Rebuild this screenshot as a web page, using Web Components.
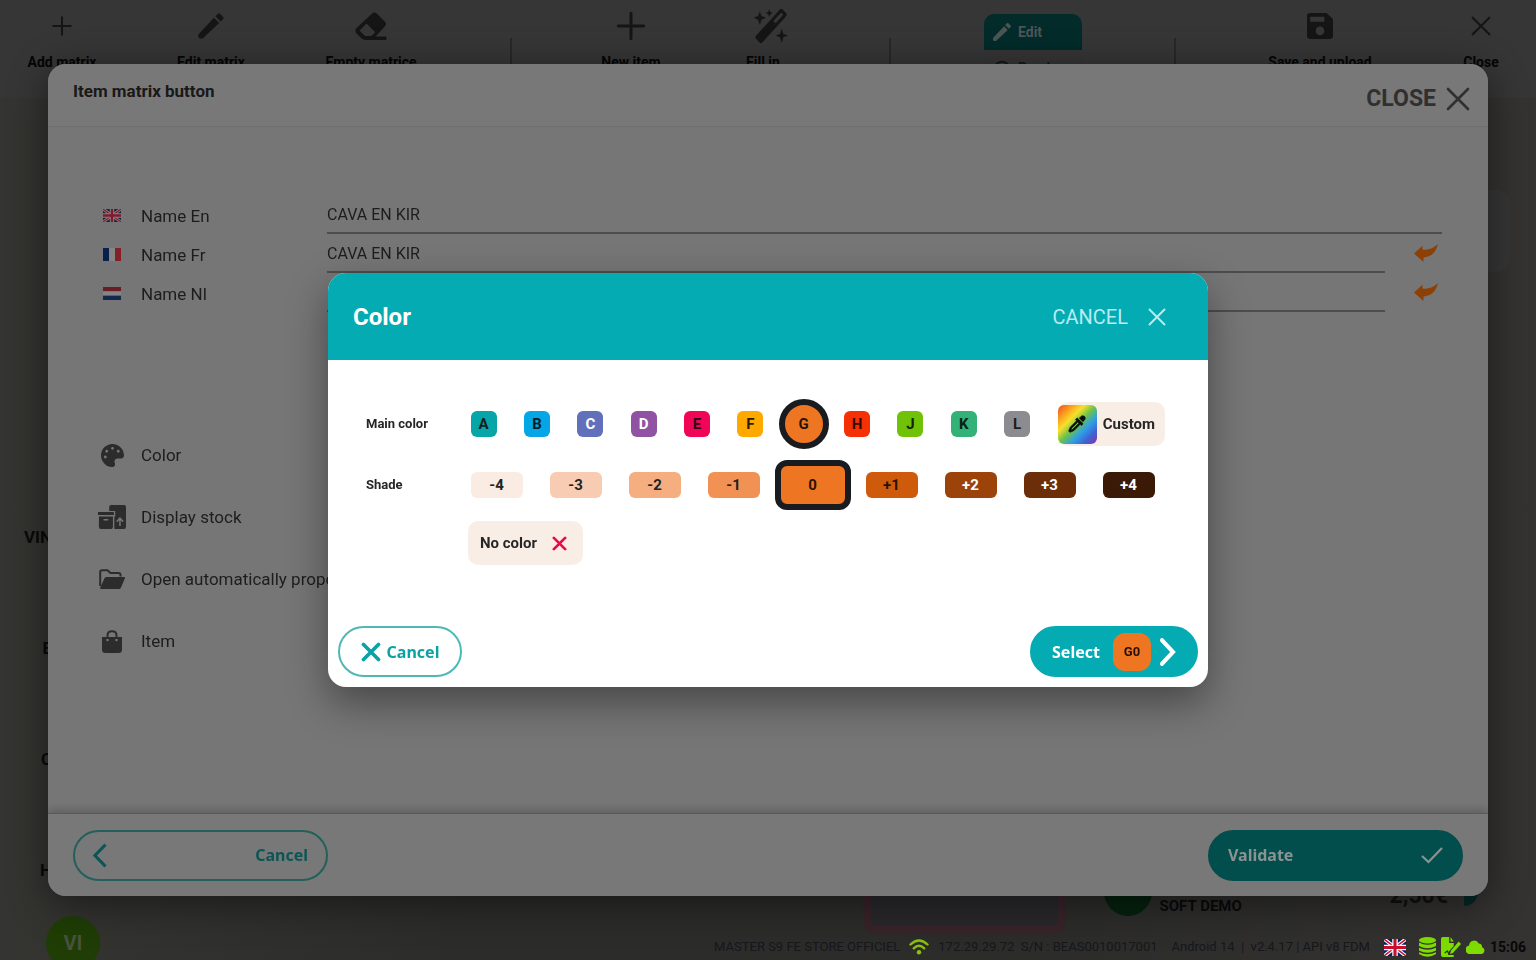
<!DOCTYPE html>
<html lang="en">
<head>
<meta charset="utf-8">
<title>Item matrix button</title>
<style>
  html, body { margin: 0; height: 100%; overflow: hidden; background: #31312f; }
  body {
    --narrow: Roboto, "Liberation Sans", sans-serif;
    --wide: "Noto Sans", sans-serif;
    --teal: #05abb2;
    font-family: var(--narrow);
  }
</style>
</head>
<body>
<pos-app></pos-app>
<script>
const ICONS = {
  plus: ['0 0 24 24', '<path d="M12 2.500V21.500M2.500 12H21.500" stroke="currentColor" stroke-width="2.200" stroke-linecap="round"/>'],
  cross: ['0 0 24 24', '<path d="M2 2L22 22M22 2L2 22" stroke="currentColor" stroke-width="2.600" stroke-linecap="round"/>'],
  crossBold: ['0 0 24 24', '<path d="M3 3L21 21M21 3L3 21" stroke="currentColor" stroke-width="4.400" stroke-linecap="round"/>'],
  pencil: ['2 2 20 20', '<path fill="currentColor" d="M20.71 7.04C21.1 6.65 21.1 6 20.71 5.63L18.37 3.29C18 2.9 17.35 2.9 16.96 3.29L15.12 5.12L18.87 8.87M3 18V19.500Q3 21 4.500 21H6L17.81 9.93L14.06 6.180Z"/>'],
  eraser: ['0 0 32 28', '<path fill="currentColor" fill-rule="evenodd" d="M17.500 1.200Q19.500-.4 21.500 1.300L30 9.700Q32 12 30 14.200L20.500 24.500H31Q32 26 31 28H10.500Q8 28 6.300 26.300L1.300 21.300Q-.6 18.500 1.500 16ZM11.500 11.500L4.500 18.500L10 24H16.500L20.300 20.200Z"/>'],
  wand: ['0 0 48 32', '<g fill="currentColor"><path fill-rule="evenodd" d="M40 1.500Q41.500 0 43 1.500L46 4.500Q47.500 6 46 7.500L23.500 30.500Q22 32 20.500 30.500L17.500 27.500Q16 26 17.500 24.500ZM41.500 4L34 11.500L36 13.500L43.500 6Z"/><path d="M21 3L22.500 7L27 8.700L22.500 10.500L21 15L19.200 10.500L15 8.700L19.200 7ZM30 1L31 3.500L33.500 4.500L31 5.500L30 8L29 5.500L26.500 4.500L29 3.500ZM42 18.500L43.500 23L48 24.500L43.500 26L42 31L40.300 26L36 24.500L40.300 23Z"/></g>'],
  save: ['0 0 24 24', '<path fill="currentColor" fill-rule="evenodd" d="M3 0H18L24 5.500V21Q24 24 21 24H3Q0 24 0 21V3Q0 0 3 0ZM3 3.500V8H16V3.500ZM12 12.500A4 4 0 1 0 12 20.500A4 4 0 1 0 12 12.500Z"/>'],
  eye: ['0 0 24 20', '<path d="M1 10Q12-6 23 10Q12 24 1 10Z" fill="none" stroke="currentColor" stroke-width="2"/><circle cx="12" cy="9" r="4" fill="currentColor"/>'],
  reply: ['0 0 24 20', '<path fill="currentColor" d="M0 10.500L8.500 2V6Q17 7.500 24 0Q21 14 9.500 15V20Z"/>'],
  palette: ['0 0 512 512', '<path fill="currentColor" d="M204.300 5C104.900 24.400 24.800 104.300 5.200 203.400c-37 187 131.700 326.400 258.800 306.700 41.200-6.400 61.400-54.600 42.500-91.700-23.100-45.400 9.900-98.400 60.900-98.400h79.700c35.800 0 64.800-29.600 64.900-65.300C511.500 97.100 368.100-26.900 204.300 5zM96 320c-17.700 0-32-14.300-32-32s14.300-32 32-32 32 14.300 32 32-14.300 32-32 32zm32-128c-17.700 0-32-14.300-32-32s14.300-32 32-32 32 14.300 32 32-14.300 32-32 32zm128-64c-17.700 0-32-14.300-32-32s14.300-32 32-32 32 14.300 32 32-14.300 32-32 32zm128 64c-17.700 0-32-14.300-32-32s14.300-32 32-32 32 14.300 32 32-14.300 32-32 32z"/>'],
  stock: ['0 0 30 24', '<g fill="currentColor"><path d="M0 7H17V10H0Z"/><path fill-rule="evenodd" d="M1 11.500H16V22Q16 24 14 24H3Q1 24 1 22ZM6 14V15.500H11V14Z"/><path fill-rule="evenodd" d="M12 6V2Q12 0 14 0H28Q30 0 30 2V22Q30 24 28 24H17.500V11.500H18.500V6ZM23.500 12L19.500 16L20.500 17.200L22.700 15.200V21H24.300V15.200L26.500 17.200L27.500 16Z"/></g>'],
  folder: ['0 0 26 20', '<path d="M1.200 17V3Q1.200 1.200 3 1.200H8.500L11.500 4H19.500Q21.500 4 21.500 6V7.500" fill="none" stroke="currentColor" stroke-width="2"/><path fill="currentColor" d="M7.500 8H25Q26.500 8 25.800 9.500L22 18.500Q21.300 20 20 20H2Q.8 20 1.200 18.800L5.500 9.300Q6.200 8 7.500 8Z"/>'],
  bag: ['0 0 20 23', '<path d="M5.500 9V5.500Q5.500 1.200 10 1.200T14.500 5.500V9" fill="none" stroke="currentColor" stroke-width="2"/><path fill="currentColor" fill-rule="evenodd" d="M0 7H20V19.500Q20 23 16.500 23H3.500Q0 23 0 19.500ZM5.500 8.800A1.200 1.200 0 1 0 5.500 11.300A1.200 1.200 0 1 0 5.500 8.800ZM14.500 8.800A1.200 1.200 0 1 0 14.500 11.300A1.200 1.200 0 1 0 14.500 8.800Z"/>'],
  chevronLeft: ['0 0 14 24', '<path d="M12.500 1.500L2 12L12.500 22.500" fill="none" stroke="currentColor" stroke-width="3"/>'],
  chevronRight: ['0 0 16 26', '<path d="M2 2L13 13L2 24" fill="none" stroke="currentColor" stroke-width="4" stroke-linecap="round"/>'],
  check: ['0 0 22 18', '<path d="M1 10L7.500 16L21 2" fill="none" stroke="currentColor" stroke-width="2.200"/>'],
  dropper: ['0 0 24 24', '<path fill="currentColor" stroke="currentColor" stroke-width=".8" d="M19.350 11.720L17.220 13.850L15.810 12.430L8.100 20.140L3.500 22L2 20.500L3.860 15.900L11.570 8.190L10.150 6.780L12.280 4.650L19.350 11.720M16.760 3C17.930 1.830 19.830 1.830 21 3C22.170 4.170 22.170 6.070 21 7.240L19.080 9.160L14.840 4.920L16.760 3M5.560 17.030L4.500 19.500L6.970 18.440L14.400 11L13 9.600L5.560 17.030Z"/>'],
  wifi: ['0 0 20 16', '<g fill="none" stroke="currentColor" stroke-width="2.400" stroke-linecap="round"><path d="M1.500 5.500Q10-2.500 18.500 5.500M4.800 9.300Q10 4.300 15.200 9.300"/></g><circle cx="10" cy="13.300" r="2.200" fill="currentColor"/>'],
  uk: ['0 0 24 18', '<path fill="var(--flag-blue,#012169)" d="M0 0H24V18H0Z"/><path stroke="var(--flag-white,#fff)" stroke-width="4" d="M0 0L24 18M24 0L0 18"/><path stroke="var(--flag-red,#c8102e)" stroke-width="1.500" d="M0 0L24 18M24 0L0 18"/><path stroke="var(--flag-white,#fff)" stroke-width="6" d="M12 0V18M0 9H24"/><path stroke="var(--flag-red,#c8102e)" stroke-width="3.400" d="M12 0V18M0 9H24"/>'],
  fr: ['0 0 24 18', '<path fill="#0b1f4d" d="M0 0H8V18H0Z"/><path fill="#858585" d="M8 0H16V18H8Z"/><path fill="#83202a" d="M16 0H24V18H16Z"/>'],
  nl: ['0 0 24 18', '<path fill="#6b1c24" d="M0 0H24V6H0Z"/><path fill="#858585" d="M0 6H24V12H0Z"/><path fill="#15294f" d="M0 12H24V18H0Z"/>'],
  db: ['0 0 18 20', '<g fill="currentColor"><ellipse cx="9" cy="3.200" rx="9" ry="3.200"/><path d="M0 5.500Q9 10 18 5.500V9Q9 13.500 0 9ZM0 10.700Q9 15 18 10.700V13.500Q9 18 0 13.500ZM0 15.200Q9 19.500 18 15.200V17Q9 22.500 0 17Z"/></g>'],
  sign: ['0 0 22 20', '<path fill="currentColor" d="M2 0H9V6H14V9L8 15V18H14V20H2Q0 20 0 18V2Q0 0 2 0ZM10.500 0L14 4.500H10.500Z"/><path d="M4 16L7 14L8.500 17L12 16.500" fill="none" stroke="#263b08" stroke-width="1.200"/><path fill="currentColor" d="M19.500 4.500L22 7L13 16L10 17L11 13.500Z"/>'],
  cloud: ['0 0 20 14', '<path fill="currentColor" d="M4.500 14A4.200 4.200 0 0 1 3.200 5.600A5.500 5.500 0 0 1 13.500 3.500A3.800 3.800 0 0 1 17 7.200A3.500 3.500 0 0 1 16.500 14Z"/>']
};

function define(name, html, init) {
  const tpl = document.createElement('template');
  tpl.innerHTML = html;
  customElements.define(name, class extends HTMLElement {
    constructor() {
      super();
      this.attachShadow({ mode: 'open' }).append(tpl.content.cloneNode(true));
    }
    connectedCallback() { if (init) init(this, this.shadowRoot); }
  });
}

/* An inline drawing, sized by its w and h attributes. */
define('ui-icon', `<style>:host{display:block;flex:none} svg{display:block}</style><svg aria-hidden="true"></svg>`, (el, root) => {
  const [box, body] = ICONS[el.getAttribute('name')];
  const svg = root.querySelector('svg');
  svg.setAttribute('viewBox', box);
  svg.setAttribute('preserveAspectRatio', 'none');
  svg.setAttribute('width', el.getAttribute('w'));
  svg.setAttribute('height', el.getAttribute('h'));
  svg.innerHTML = body;
});

define('tool-button', `<style>
  :host{display:block;justify-self:center}
  button{display:flex;flex-direction:column;align-items:center;gap:8px;padding:8px 0;border:0;background:none;color:#050505;font:bold 14px/20px var(--narrow);white-space:nowrap}
  .art{display:grid;place-items:center;height:36px;color:#151515}
</style><button type="button"><span class="art"><slot name="icon"></slot></span><slot></slot></button>`);

define('app-toolbar', `<style>
  :host{display:grid;grid-template-columns:124fr 174fr 146fr 134fr 106fr 158fr 96fr 190fr 94fr 196fr 8fr 110fr;height:98px;background:#363636}
  i{justify-self:center;width:2px;margin:38px 0 20px;background:#282828}
  .mode{justify-self:center;width:98px;margin-top:14px}
  .mode button{display:flex;align-items:center;gap:6px;width:100%;height:36px;padding:0 8px;border:0;font:bold 14px/20px var(--narrow);background:#353535;color:#151515}
  .mode .on{border-radius:10px 10px 0 0;background:#022b2a;color:#4c5555}
  .last{grid-column:12}
</style>
<tool-button><ui-icon slot="icon" name="plus" w="22" h="22"></ui-icon>Add matrix</tool-button>
<tool-button><ui-icon slot="icon" name="pencil" w="28" h="28"></ui-icon>Edit matrix</tool-button>
<tool-button><ui-icon slot="icon" name="eraser" w="32" h="28"></ui-icon>Empty matrice</tool-button>
<i></i>
<tool-button><ui-icon slot="icon" name="plus" w="32" h="32"></ui-icon>New item</tool-button>
<tool-button><ui-icon slot="icon" name="wand" w="50" h="36"></ui-icon>Fill in</tool-button>
<i></i>
<div class="mode"><button class="on" type="button"><ui-icon name="pencil" w="20" h="20"></ui-icon>Edit</button><button type="button"><ui-icon name="eye" w="20" h="16"></ui-icon>Preview</button></div>
<i></i>
<tool-button><ui-icon slot="icon" name="save" w="26" h="26"></ui-icon>Save and upload</tool-button>
<tool-button class="last"><ui-icon slot="icon" name="cross" w="20" h="20"></ui-icon>Close</tool-button>`);

define('side-categories', `<style>
  :host{display:block}
  ul{display:grid;grid-auto-rows:111px;align-items:center;width:52px;margin:383px 0 0;padding:0;list-style:none;text-align:right;font:bold 17px/24px var(--narrow);color:#0a0a0a}
  .tile{display:grid;place-items:center;width:54px;height:54px;margin:-9px 0 0 46px;border-radius:50%;background:#1f3d05;color:#48533d;font:bold 20px/24px var(--narrow)}
</style><ul><li>VIN</li><li>E</li><li>C</li><li>H</li></ul><div class="tile">VI</div>`);

define('order-strip', `<style>
  :host{display:flex;justify-content:flex-end;align-items:flex-end;gap:38px;padding-right:58px}
  .slot{box-sizing:border-box;width:203px;height:60px;border:8px solid #38242a;border-radius:14px;background:#29282b}
  .demo{display:flex;align-items:flex-end;gap:8px;height:78px;font:bold 15px/20px var(--narrow);color:#0a0a0a}
  .dot{width:48px;height:48px;margin-bottom:18px;border-radius:50%;background:#06220f}
  .name{margin-bottom:18px;width:222px}
  .price{margin-bottom:20px;font:bold 23px/36px var(--narrow);color:#111}
  .tag{width:14px;height:36px;margin:0 0 28px 8px;border-radius:0 0 14px 0;background:#042826}
</style><div class="slot"></div><div class="demo"><span class="dot"></span><span class="name">SOFT DEMO</span><span class="price">2,50€</span><span class="tag"></span></div>`);

define('status-bar', `<style>
  :host{display:flex;justify-content:flex-end;align-items:center;height:26px;padding-right:10px;font:13px/20px var(--narrow);color:#17171c;white-space:nowrap}
  .wifi{margin:0 9px;color:#8dbf10}
  .sys{display:flex;align-items:center;gap:5px;margin-left:14px;color:#7edc00}
  .uk{margin-right:8px}
  .gap{margin-left:14px}
  time{font:bold 14px/20px var(--narrow);color:#080808}
</style>
<span>MASTER S9 FE STORE OFFICIEL</span><ui-icon class="wifi" name="wifi" w="20" h="16"></ui-icon><span>172.29.29.72&nbsp; S/N : BEAS0010017001</span><span class="gap">Android 14&nbsp; |&nbsp; v2.4.17 | API v8 FDM</span>
<div class="sys"><ui-icon class="uk" name="uk" w="22" h="17"></ui-icon><ui-icon name="db" w="17" h="20"></ui-icon><ui-icon name="sign" w="20" h="20"></ui-icon><ui-icon name="cloud" w="19" h="14"></ui-icon><time>15:06</time></div>`);

define('pill-button', `<style>
  :host{display:block}
  button{box-sizing:border-box;display:flex;align-items:center;width:100%;height:51px;border-radius:26px;padding:0 18px;font:bold 16px/24px var(--wide);border:2px solid var(--edge);background:var(--fill,transparent);color:var(--ink)}
  :host([spread]) button{justify-content:space-between}
  :host([tight]) button{justify-content:center;gap:6px}
</style><button type="button"><slot></slot></button>`);

define('field-row', `<style>
  :host{display:grid;grid-template-columns:28px 171px 1fr;column-gap:15px;align-items:center;height:39px;font:17px/24px var(--narrow);color:#1d1d1d}
  :host([undo]){grid-template-columns:28px 171px 1fr 42px}
  ::slotted(ui-icon){justify-self:center}
  input{box-sizing:border-box;min-width:0;width:100%;height:36px;padding:0;border:0;border-bottom:2px solid #4d4d4d;background:none;color:inherit;font:inherit;font-size:16px;outline:0}
  button{display:none;padding:0 4px 4px 0;border:0;background:none;color:#8c4005;justify-self:end}
  :host([undo]) button{display:block}
</style><slot></slot><label for="v"></label><input id="v" type="text"><button type="button" aria-label="Restore name"><ui-icon name="reply" w="24" h="18"></ui-icon></button>`, (el, root) => {
  root.querySelector('label').textContent = el.getAttribute('label');
  root.querySelector('input').value = el.getAttribute('value');
});

define('option-row', `<style>
  :host{display:grid;grid-template-columns:28px 1fr;column-gap:15px;align-items:center;height:62px;font:17px/24px var(--narrow);color:#1d1d1d;white-space:nowrap}
  ::slotted(ui-icon){justify-self:center;color:#2c2c2c}
</style><slot name="icon"></slot><slot></slot>`);

define('item-dialog', `<style>
  :host{position:fixed;inset:64px 48px;display:flex;flex-direction:column;border-radius:18px;overflow:hidden;background:#767676;box-shadow:0 8px 40px #0007}
  header{display:flex;justify-content:space-between;align-items:center;height:62px;padding:0 18px 0 25px;border-bottom:1px solid #6f6f6f;background:#787878;color:#191919}
  h1{margin:0;padding-bottom:8px;font:bold 17px/24px var(--narrow)}
  header button{display:flex;align-items:center;gap:10px;margin-top:8px;padding:0;border:0;background:none;color:#303030;font:bold 23px/32px var(--narrow)}
  main{flex:1;padding:69px 46px 0 50px;--flag-white:#858585;--flag-blue:#1a2244;--flag-red:#801a2a}
  .options{margin-top:111px}
  footer{display:flex;justify-content:space-between;align-items:center;height:82px;padding:0 25px;border-top:1px solid #5a5a5a;box-shadow:0 -3px 8px #0003;background:#787878}
  footer pill-button{width:255px}
  .back{--edge:#23605c;--ink:#0b5654}
  .ok{--edge:#024e4d;--fill:#024e4d;--ink:#8b9392}
</style>
<header><h1>Item matrix button</h1><button type="button">CLOSE <ui-icon name="cross" w="24" h="24"></ui-icon></button></header>
<main>
  <div>
    <field-row label="Name En" value="CAVA EN KIR"><ui-icon name="uk" w="18" h="13"></ui-icon></field-row>
    <field-row undo label="Name Fr" value="CAVA EN KIR"><ui-icon name="fr" w="18" h="13"></ui-icon></field-row>
    <field-row undo label="Name Nl" value=""><ui-icon name="nl" w="18" h="13"></ui-icon></field-row>
  </div>
  <div class="options">
    <option-row><ui-icon slot="icon" name="palette" w="23" h="23"></ui-icon>Color</option-row>
    <option-row><ui-icon slot="icon" name="stock" w="28" h="24"></ui-icon>Display stock</option-row>
    <option-row><ui-icon slot="icon" name="folder" w="26" h="20"></ui-icon>Open automatically propo</option-row>
    <option-row><ui-icon slot="icon" name="bag" w="20" h="23"></ui-icon>Item</option-row>
  </div>
</main>
<footer><pill-button class="back" spread><ui-icon name="chevronLeft" w="14" h="25"></ui-icon>Cancel</pill-button><pill-button class="ok" spread>Validate<ui-icon name="check" w="22" h="18"></ui-icon></pill-button></footer>`);

/* One radio group of coloured chips; each item is "text|fill|ink", items are separated by spaces. */
define('swatch-group', `<style>
  :host{display:block}
  div{display:grid;grid-auto-flow:column;grid-auto-columns:1fr;place-items:center;height:50px}
  label{position:relative;display:grid;place-items:center;box-sizing:border-box;width:var(--w,26px);height:26px;border-radius:6px;font:bold 15px/20px var(--narrow)}
  input{position:absolute;inset:0;width:100%;height:100%;margin:0;opacity:0}
  label:has(:checked){width:var(--on-w,50px);height:50px;border:6px solid #181b20;border-radius:var(--on-r,50%)}
</style><div role="radiogroup"></div>`, (el, root) => {
  const box = root.querySelector('div');
  box.setAttribute('aria-label', el.getAttribute('label'));
  for (const item of el.getAttribute('items').split(' ')) {
    const [text, fill, ink] = item.split('|');
    const label = document.createElement('label');
    const input = document.createElement('input');
    input.type = 'radio';
    input.name = 'swatch';
    input.checked = text === el.getAttribute('value');
    label.style.background = fill;
    label.style.color = ink;
    label.append(input, text);
    box.append(label);
  }
});

define('color-dialog', `<style>
  :host{position:fixed;inset:0;display:grid;place-items:center}
  section{width:min(880px,94vw);border-radius:18px;overflow:hidden;background:#fff;box-shadow:0 16px 40px #0006;color:#262626}
  header{display:flex;justify-content:space-between;align-items:center;height:87px;padding:0 42px 0 25px;background:var(--teal);color:#fff}
  h2{margin:0;font:bold 24px/32px var(--narrow)}
  header button{display:flex;align-items:center;gap:20px;padding:0;border:0;background:none;color:#b5edf2;font:20px/32px var(--narrow)}
  .grid{display:grid;grid-template-columns:91px 1fr;align-items:center;row-gap:11px;padding:39px 40px 0 38px}
  .grid>span{font:bold 13px/20px var(--narrow)}
  .main{display:flex;align-items:center;gap:14px}
  .main swatch-group{flex:1}
  .shade{--w:52px;--on-w:76px;--on-r:12px}
  .chip{display:flex;align-items:center;height:44px;border:0;border-radius:10px;background:#f9eee6;color:#262626;font:bold 15px/24px var(--narrow)}
  .custom{gap:6px;padding:0 10px 0 0;margin-right:3px}
  .rainbow{display:grid;place-items:center;width:39px;height:39px;border-radius:6px;color:#0b0b0b;background:linear-gradient(135deg,#f0442c 0%,#fb9a1c 18%,#f7e02b 34%,#69c24a 50%,#2f9de8 66%,#3f62d2 82%,#8e2fa8 100%)}
  .none{grid-column:2;justify-self:start;gap:15px;margin:0 0 0 11px;padding:0 16px 0 12px}
  .none ui-icon{color:#ea0a50}
  footer{display:flex;justify-content:space-between;padding:61px 10px 10px}
  .no{width:124px;--edge:#4db8b6;--ink:#0aa3a5}
  .yes{width:168px;--edge:var(--teal);--fill:var(--teal);--ink:#fff}
  .pick{flex:none;display:grid;place-items:center;width:38px;height:38px;margin:0 3px 0 7px;border-radius:12px;background:#ee7623;color:#2a0f00;font:bold 13px/20px var(--narrow)}
</style>
<section role="dialog" aria-label="Color">
<header><h2>Color</h2><button type="button">CANCEL <ui-icon name="cross" w="18" h="18"></ui-icon></button></header>
<div class="grid">
  <span>Main color</span>
  <div class="main"><swatch-group label="Main color" value="G" items="A|#05a5a8|#10201f B|#05a6e6|#081c28 C|#6270bc|#fff D|#9053a4|#fff E|#f00557|#30000f F|#ffa800|#2b1c00 G|#ee7623|#2a1200 H|#f53005|#300800 J|#6fc205|#142400 K|#32b277|#082417 L|#8b8b90|#1d1d1d"></swatch-group>
  <button class="chip custom" type="button"><span class="rainbow"><ui-icon name="dropper" w="20" h="20"></ui-icon></span>Custom</button></div>
  <span>Shade</span>
  <swatch-group class="shade" label="Shade" value="0" items="-4|#fbece3|#222 -3|#f8ccb2|#222 -2|#f4ae80|#222 -1|#f19254|#222 0|#ee7623|#2a1200 +1|#ce5b0b|#2a1200 +2|#9c430a|#fff +3|#6c2e08|#fff +4|#3a1a06|#fff"></swatch-group>
  <button class="chip none" type="button">No color <ui-icon name="crossBold" w="15" h="15"></ui-icon></button>
</div>
<footer><pill-button class="no" tight><ui-icon name="crossBold" w="20" h="20"></ui-icon>Cancel</pill-button><pill-button class="yes" tight>Select<span class="pick">G0</span><ui-icon name="chevronRight" w="16" h="28"></ui-icon></pill-button></footer>
</section>`);

define('pos-app', `<style>
  :host{display:flex;flex-direction:column;height:100vh;overflow:hidden;background:linear-gradient(90deg,#343431,#2c2c2b 30%,#2c2c2b 70%,#343331)}
  .stage{flex:1;min-height:0;display:flex;justify-content:space-between}
  .right{flex:1;display:flex;flex-direction:column;justify-content:space-between;min-width:0}
  .card{align-self:flex-end;width:80px;height:82px;margin:92px 26px 0 0;border-radius:14px;background:#363636}
  side-categories{width:148px}
</style>
<app-toolbar></app-toolbar>
<div class="stage"><side-categories></side-categories><div class="right"><div class="card"></div><div><order-strip></order-strip><status-bar></status-bar></div></div></div>
<item-dialog></item-dialog><color-dialog></color-dialog>`);
</script>
</body>
</html>
